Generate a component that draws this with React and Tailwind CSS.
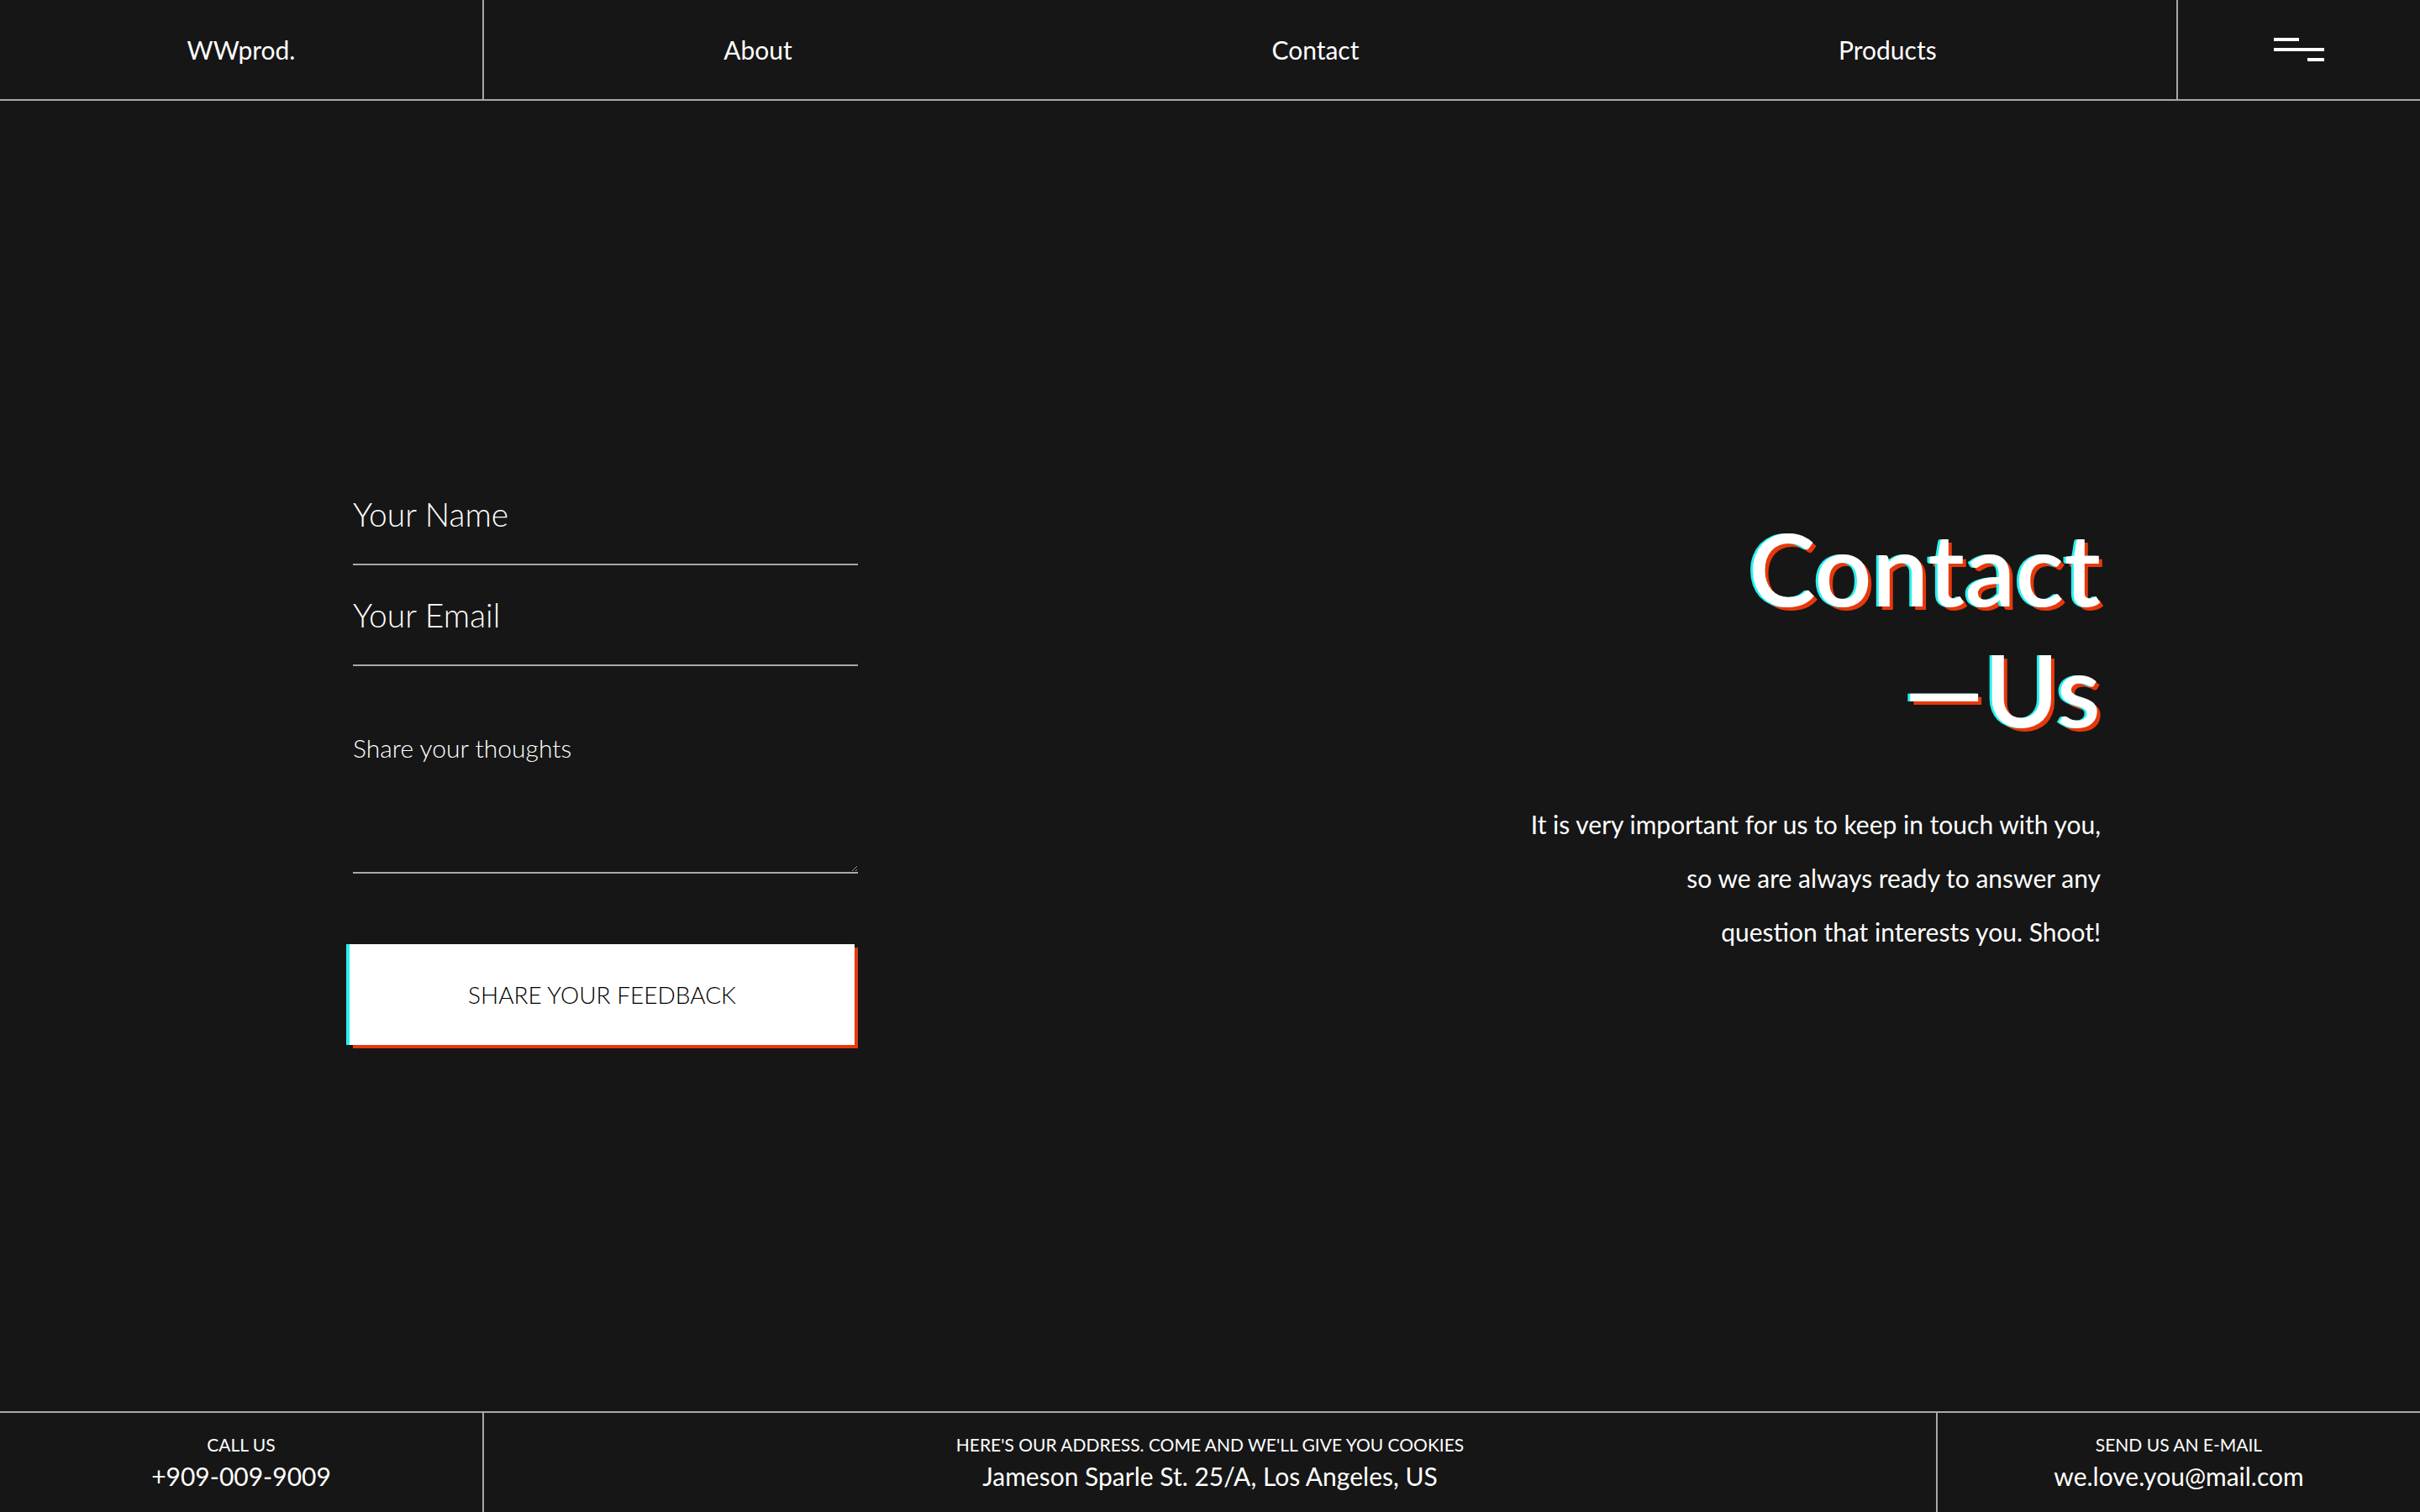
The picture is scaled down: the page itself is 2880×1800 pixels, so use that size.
import { useState } from 'react';

const navLinks = ['About', 'Contact', 'Products'];

function MenuIcon() {
  return (
    <div className="flex flex-col gap-2 w-[60px]">
      <span className="block h-1 w-[30px] bg-white" />
      <span className="block h-1 w-[60px] bg-white" />
      <span className="block h-1 w-5 bg-white self-end" />
    </div>
  );
}

function FooterCell({ label, value, className = '' }) {
  return (
    <div className={`flex flex-col items-center justify-center gap-1 ${className}`}>
      <span className="text-[21px] leading-[28px] uppercase">{label}</span>
      <span className="text-[30px] leading-[38px]">{value}</span>
    </div>
  );
}

export default function App() {
  const [form, setForm] = useState({ name: '', email: '', message: '' });

  const handleChange = (key, value) => setForm({ ...form, [key]: value });

  return (
    <div className="h-[1800px] flex flex-col bg-[#161616] text-white font-['Lato',sans-serif]">
      {/* Top nav */}
      <header className="h-[120px] flex border-b-2 border-[#a8a8a8]">
        <div className="w-[576px] border-r-2 border-[#a8a8a8] flex items-center justify-center text-[30px]">
          WWprod.
        </div>
        <nav className="flex-1 flex items-center justify-around text-[30px]">
          {navLinks.map((link) => (
            <a key={link} href="#" className="hover:opacity-70">
              {link}
            </a>
          ))}
        </nav>
        <button className="w-[290px] border-l-2 border-[#a8a8a8] flex items-center justify-center">
          <MenuIcon />
        </button>
      </header>

      {/* Main */}
      <main className="flex-1 flex items-center justify-between pl-[420px] pr-[380px]">
        <form className="w-[601px] flex flex-col" onSubmit={(e) => e.preventDefault()}>
          <input
            className="h-[120px] bg-transparent border-b-2 border-[#a8a8a8] outline-none text-[39px] font-light placeholder:text-white"
            placeholder="Your Name"
            value={form.name}
            onChange={(e) => handleChange('name', e.target.value)}
          />
          <input
            className="h-[120px] bg-transparent border-b-2 border-[#a8a8a8] outline-none text-[39px] font-light placeholder:text-white"
            placeholder="Your Email"
            value={form.email}
            onChange={(e) => handleChange('email', e.target.value)}
          />
          <textarea
            className="h-[247px] pt-[75px] bg-transparent border-b-2 border-[#a8a8a8] outline-none text-[30px] leading-[44px] font-light placeholder:text-white"
            placeholder="Share your thoughts"
            value={form.message}
            onChange={(e) => handleChange('message', e.target.value)}
          />
          <button
            type="submit"
            className="mt-[88px] h-[120px] bg-white text-black text-[28px] font-light uppercase -translate-x-1 -translate-y-1 shadow-[-4px_0_0_#27f1f1,4px_4px_0_#e6390b]"
          >
            Share your feedback
          </button>
        </form>

        <div className="flex flex-col items-end mb-[55px]">
          <h1 className="text-[120px] leading-[144px] font-semibold text-right [text-shadow:-3px_0_0_#27f1f1,4px_4px_0_#e6390b]">
            Contact
            <br />
            —Us
          </h1>
          <p className="mt-[57px] text-[30px] leading-[64px] text-right">
            It is very important for us to keep in touch with you,
            <br />
            so we are always ready to answer any
            <br />
            question that interests you. Shoot!
          </p>
        </div>
      </main>

      {/* Footer */}
      <footer className="h-[120px] flex border-t-2 border-[#a8a8a8]">
        <FooterCell label="Call us" value="+909-009-9009" className="w-[576px] border-r-2 border-[#a8a8a8]" />
        <FooterCell
          label="Here's our address. Come and we'll give you cookies"
          value="Jameson Sparle St. 25/A, Los Angeles, US"
          className="flex-1"
        />
        <FooterCell label="Send us an e-mail" value="we.love.you@mail.com" className="w-[576px] border-l-2 border-[#a8a8a8]" />
      </footer>
    </div>
  );
}
